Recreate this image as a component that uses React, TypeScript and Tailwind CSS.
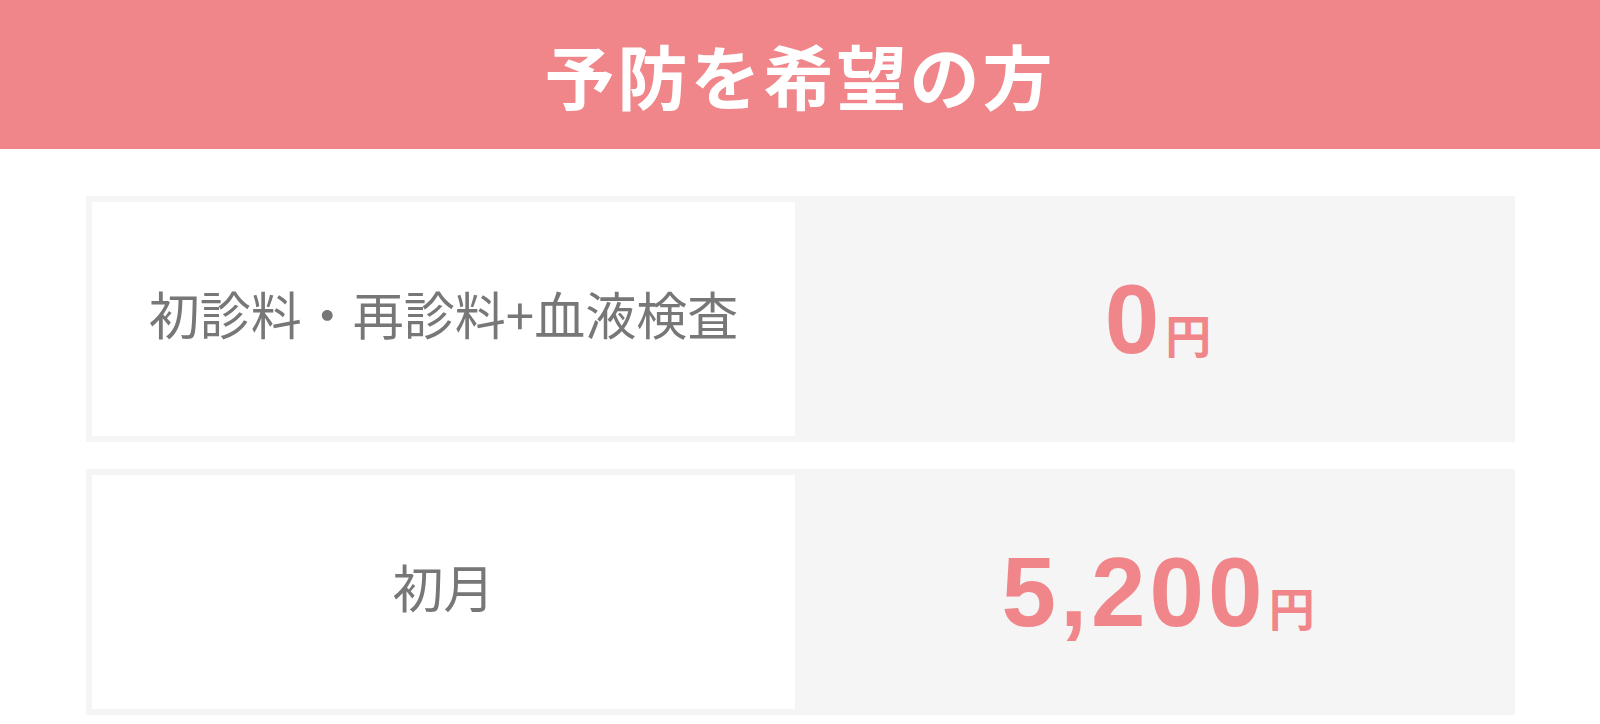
import React from "react";

const jp = { fontFamily: '"Noto Sans CJK JP", "Noto Sans", sans-serif' };
const num = { fontFamily: '"Liberation Sans", Arial, "Noto Sans CJK JP", sans-serif' };

function Row({ label, price }: { label: string; price: string }) {
  return (
    <div className="flex h-[246px] bg-[#f5f5f5] p-[6px]">
      <div className="flex w-[703px] items-center justify-center bg-white pb-[12px]">
        <span className="text-[51px] leading-none text-[#777777]" style={jp}>
          {label}
        </span>
      </div>
      <div className="flex flex-1 items-center justify-center pl-[12px]">
        <span className="flex items-baseline text-[#f0858a]">
          <span className="text-[98px] font-bold leading-none tracking-[4px]" style={num}>
            {price}
          </span>
          <span className="ml-[2px] text-[46px] font-bold leading-none" style={jp}>
            円
          </span>
        </span>
      </div>
    </div>
  );
}

export default function App() {
  return (
    <div className="min-h-[724px] w-full bg-white">
      <div className="flex h-[149px] items-center justify-center bg-[#f0858a]">
        <h1 className="text-[70px] font-bold leading-none tracking-[3px] text-white" style={jp}>
          予防を希望の方
        </h1>
      </div>
      <div className="ml-[86px] mt-[47px] flex w-[1429px] flex-col gap-[27px]">
        <Row label="初診料・再診料+血液検査" price="0" />
        <Row label="初月" price="5,200" />
      </div>
    </div>
  );
}
